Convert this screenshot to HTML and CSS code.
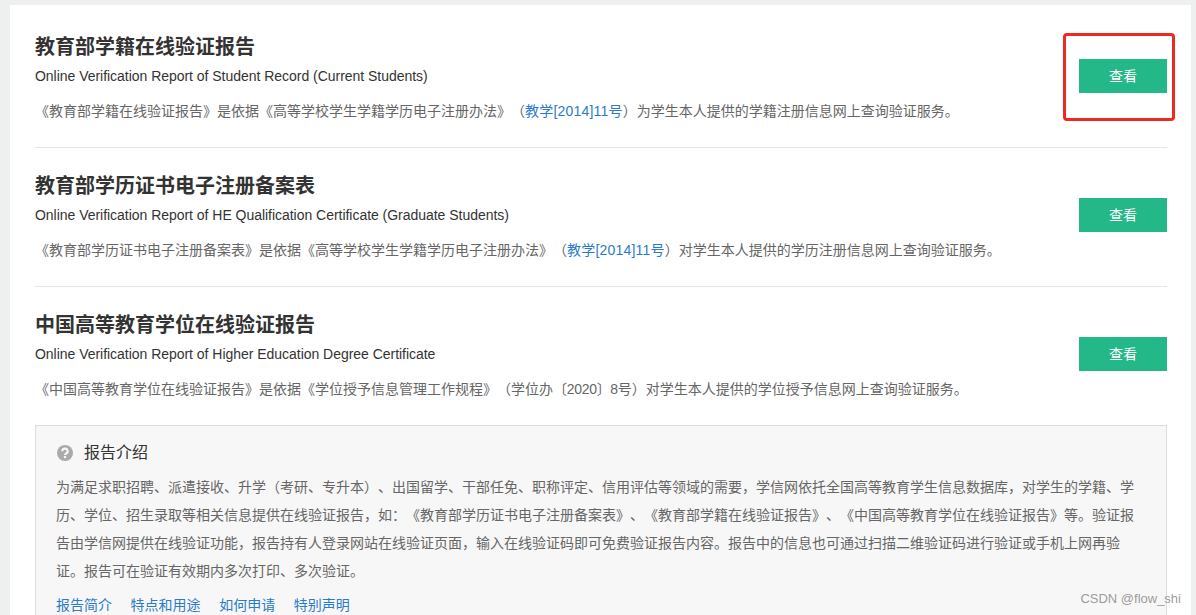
FILE: index.html
```html
<!DOCTYPE html>
<html lang="zh-CN">
<head>
  <meta charset="UTF-8" />
  <title>在线验证报告</title>
  <link rel="stylesheet" href="styles.css">
</head>
<body>
  <div class="card">
    <div class="report">
      <div class="report-info">
        <h2>教育部学籍在线验证报告</h2>
        <div class="en">Online Verification Report of Student Record (Current Students)</div>
        <p>《教育部学籍在线验证报告》是依据《高等学校学生学籍学历电子注册办法》（<a href="#">教学[2014]11号</a>）为学生本人提供的学籍注册信息网上查询验证服务。</p>
      </div>
      <a class="btn" href="#">查看</a>
    </div>
    <div class="report">
      <div class="report-info">
        <h2>教育部学历证书电子注册备案表</h2>
        <div class="en">Online Verification Report of HE Qualification Certificate (Graduate Students)</div>
        <p>《教育部学历证书电子注册备案表》是依据《高等学校学生学籍学历电子注册办法》（<a href="#">教学[2014]11号</a>）对学生本人提供的学历注册信息网上查询验证服务。</p>
      </div>
      <a class="btn" href="#">查看</a>
    </div>
    <div class="report last">
      <div class="report-info">
        <h2>中国高等教育学位在线验证报告</h2>
        <div class="en">Online Verification Report of Higher Education Degree Certificate</div>
        <p>《中国高等教育学位在线验证报告》是依据《学位授予信息管理工作规程》（学位办<span class="doc-no">〔2020〕8</span>号）对学生本人提供的学位授予信息网上查询验证服务。</p>
      </div>
      <a class="btn" href="#">查看</a>
    </div>

    <div class="intro">
      <div class="intro-title">
        <svg width="16" height="16" viewBox="0 0 16 16"><circle cx="8" cy="8" r="8" fill="#aaa"/><path d="M5.3 6.2a2.7 2.5 0 1 1 4 2.1c-.9.5-1.3.9-1.3 1.7" fill="none" stroke="#f7f7f7" stroke-width="2.1"/><rect x="6.9" y="11" width="2.2" height="2.2" fill="#f7f7f7"/></svg>
        <span>报告介绍</span>
      </div>
      <p>为满足求职招聘、派遣接收、升学（考研、专升本）、出国留学、干部任免、职称评定、信用评估等领域的需要，学信网依托全国高等教育学生信息数据库，对学生的学籍、学历、学位、招生录取等相关信息提供在线验证报告，如：《教育部学历证书电子注册备案表》、《教育部学籍在线验证报告》、《中国高等教育学位在线验证报告》等。验证报告由学信网提供在线验证功能，报告持有人登录网站在线验证页面，输入在线验证码即可免费验证报告内容。报告中的信息也可通过扫描二维验证码进行验证或手机上网再验证。报告可在验证有效期内多次打印、多次验证。</p>
      <div class="links">
        <a href="#">报告简介</a>
        <a href="#">特点和用途</a>
        <a href="#">如何申请</a>
        <a href="#">特别声明</a>
      </div>
    </div>
  </div>

  <div class="red-mark"></div>
  <div class="watermark">CSDN @flow_shi</div>
</body>
</html>
```

FILE: styles.css
```css
html, body {
  height: 615px;
  overflow: hidden;
}

body {
  margin: 0;
  padding-top: 5px;
  background: #eef0f0;
  font-family: "Liberation Sans", Arial, "Noto Sans CJK SC", sans-serif;
  color: #333;
  position: relative;
  text-spacing-trim: space-all;
}

a {
  text-decoration: none;
  color: #2a7bc9;
}

.card {
  margin-left: 10px;
  width: 1132px;
  padding: 0 24px 0 25px;
  background: #fff;
  height: 610px;
  overflow: hidden;
}

.report {
  display: flex;
  justify-content: space-between;
  align-items: flex-start;
  height: 143px;
  box-sizing: border-box;
  border-bottom: 1px solid #e5e5e5;
  padding-top: 29px;
}

.report + .report {
  height: 139px;
  padding-top: 25px;
}

.report.last {
  border-bottom: none;
}

.report h2 {
  margin: 0;
  font-size: 20px;
  line-height: 26px;
  font-weight: bold;
  color: #333;
}

.en {
  margin-top: 6px;
  font-size: 14px;
  line-height: 20px;
  letter-spacing: -0.03px;
  color: #333;
}

.report p {
  margin: 15px 0 0;
  font-size: 14px;
  line-height: 20px;
  color: #666;
}

.report p a {
  letter-spacing: 0.2px;
}

.doc-no {
  letter-spacing: -0.3px;
}

.btn {
  display: block;
  width: 88px;
  height: 34px;
  margin-top: 25px;
  line-height: 34px;
  text-align: center;
  font-size: 14px;
  color: #fff;
  background: #24b787;
}

.intro {
  border: 1px solid #ddd;
  background: #f7f7f7;
  padding: 15px 20px 0;
  margin-top: -1px;
  height: 300px;
}

.intro-title {
  display: flex;
  align-items: center;
  gap: 11px;
  font-size: 16px;
  line-height: 24px;
  color: #333;
  margin-left: 1px;
}

.intro p {
  margin: 8px 0 0;
  width: 1080px;
  font-size: 14px;
  line-height: 28px;
  color: #666;
}

.links {
  display: flex;
  gap: 18.6px;
  margin-top: 10px;
  font-size: 14px;
  line-height: 20px;
}

/* annotation drawn on top of the screenshot */
.red-mark {
  position: absolute;
  left: 1063px;
  top: 33px;
  width: 106px;
  height: 82px;
  border: 3px solid #ee2a1e;
  border-radius: 4px;
}

.watermark {
  position: absolute;
  right: 15px;
  top: 590px;
  font-size: 13px;
  line-height: 18px;
  color: rgba(130, 130, 130, 0.8);
}
```
